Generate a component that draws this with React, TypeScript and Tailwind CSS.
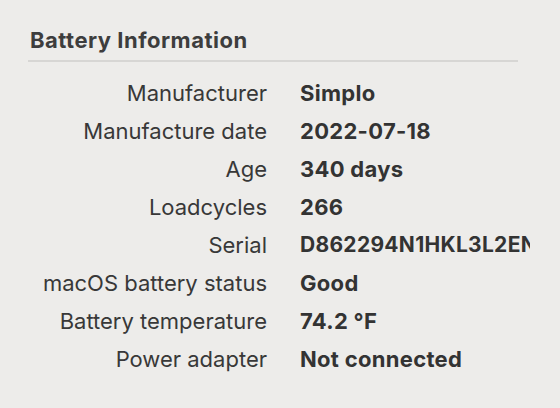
const rows: Array<[string, string]> = [
  ['Manufacturer', 'Simplo'],
  ['Manufacture date', '2022-07-18'],
  ['Age', '340 days'],
  ['Loadcycles', '266'],
  ['Serial', 'D862294N1HKL3L2EN4'],
  ['macOS battery status', 'Good'],
  ['Battery temperature', '74.2 °F'],
  ['Power adapter', 'Not connected'],
];

export default function App() {
  return (
    <div
      className="w-[560px] h-[408px] overflow-hidden bg-[#edecea] text-[#383838]"
      style={{ fontFamily: 'Inter, "Noto Sans", sans-serif' }}
    >
      <div className="pl-[30px] pt-[26px] w-[518px]">
        <h2 className="text-[22px] leading-[28px] font-bold tracking-[0.5px] text-[#3d3d3d]">
          Battery Information
        </h2>
        <div className="mt-[6px] h-[2px] bg-[#d7d6d4] -ml-[2px]" />
      </div>

      <div className="mt-[12px] grid grid-cols-[237px_230px] gap-x-[33px] pl-[30px]">
        {rows.map(([label, value]) => (
          <div key={label} className="contents">
            <div className="h-[38px] flex items-center justify-end text-[22px] whitespace-nowrap">
              {label}
            </div>
            <div
              className={
                label === 'Serial'
                  ? 'h-[38px] flex items-center overflow-hidden text-[21px] tracking-[0.3px] font-bold whitespace-nowrap text-[#333]'
                  : 'h-[38px] flex items-center overflow-hidden text-[22px] tracking-[0.3px] font-bold whitespace-nowrap text-[#333]'
              }
            >
              {value}
            </div>
          </div>
        ))}
      </div>
    </div>
  );
}
